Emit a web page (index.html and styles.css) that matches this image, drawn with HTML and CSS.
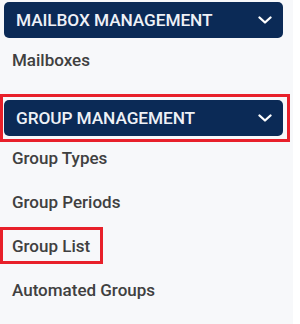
FILE: index.html
```html
<!DOCTYPE html>
<html>
<head>
<meta charset="utf-8">
<link rel="stylesheet" href="styles.css">
</head>
<body>
<nav class="sidebar">
  <div class="section">
    <div class="section-head">
      <span class="section-title">MAILBOX MANAGEMENT</span>
      <svg class="chev" width="14" height="8" viewBox="0 0 14 8"><path d="M1.5 1.5 L7 6.5 L12.5 1.5" fill="none" stroke="#fff" stroke-width="2.3" stroke-linecap="round" stroke-linejoin="round"/></svg>
    </div>
    <a class="item">Mailboxes</a>
  </div>
  <div class="section second">
    <div class="section-head marked">
      <span class="section-title">GROUP MANAGEMENT</span>
      <svg class="chev" width="14" height="8" viewBox="0 0 14 8"><path d="M1.5 1.5 L7 6.5 L12.5 1.5" fill="none" stroke="#fff" stroke-width="2.3" stroke-linecap="round" stroke-linejoin="round"/></svg>
    </div>
    <a class="item">Group Types</a>
    <a class="item">Group Periods</a>
    <a class="item marked-item">Group List</a>
    <a class="item">Automated Groups</a>
  </div>
</nav>
</body>
</html>
```
FILE: styles.css
```css
html, body {
  margin: 0;
  padding: 0;
  background: #ffffff;
}
body {
  font-family: Roboto, "Liberation Sans", sans-serif;
}
.sidebar {
  width: 293px;
  height: 324px;
  background: #f7f8fa;
  padding: 2px 0 0 4px;
  box-sizing: border-box;
}
.section {
  display: flex;
  flex-direction: column;
  width: 279px;
}
.second {
  margin-top: 18px;
}
.section-head {
  position: relative;
  height: 36px;
  background: #0b2a56;
  border-radius: 5px;
  display: flex;
  align-items: center;
  justify-content: space-between;
  padding: 0 11px 0 12px;
  box-sizing: border-box;
}
.section-title {
  color: #eef1f6;
  font-size: 17.3px;
  font-weight: 500;
  letter-spacing: -0.1px;
}
.chev {
  display: block;
}
.item {
  display: block;
  align-self: flex-start;
  position: relative;
  color: #404040;
  font-size: 17px;
  font-weight: 500;
  line-height: 20px;
  padding: 0 8px;
  margin-top: 12px;
  margin-bottom: 12px;
}
.marked::after {
  content: "";
  position: absolute;
  left: -4px;
  right: -7px;
  top: -6px;
  bottom: -6px;
  border: 3px solid #e8202a;
}
.marked-item::after {
  content: "";
  position: absolute;
  left: -4px;
  right: -5px;
  top: -9px;
  bottom: -8px;
  border: 3px solid #e8202a;
}
```
